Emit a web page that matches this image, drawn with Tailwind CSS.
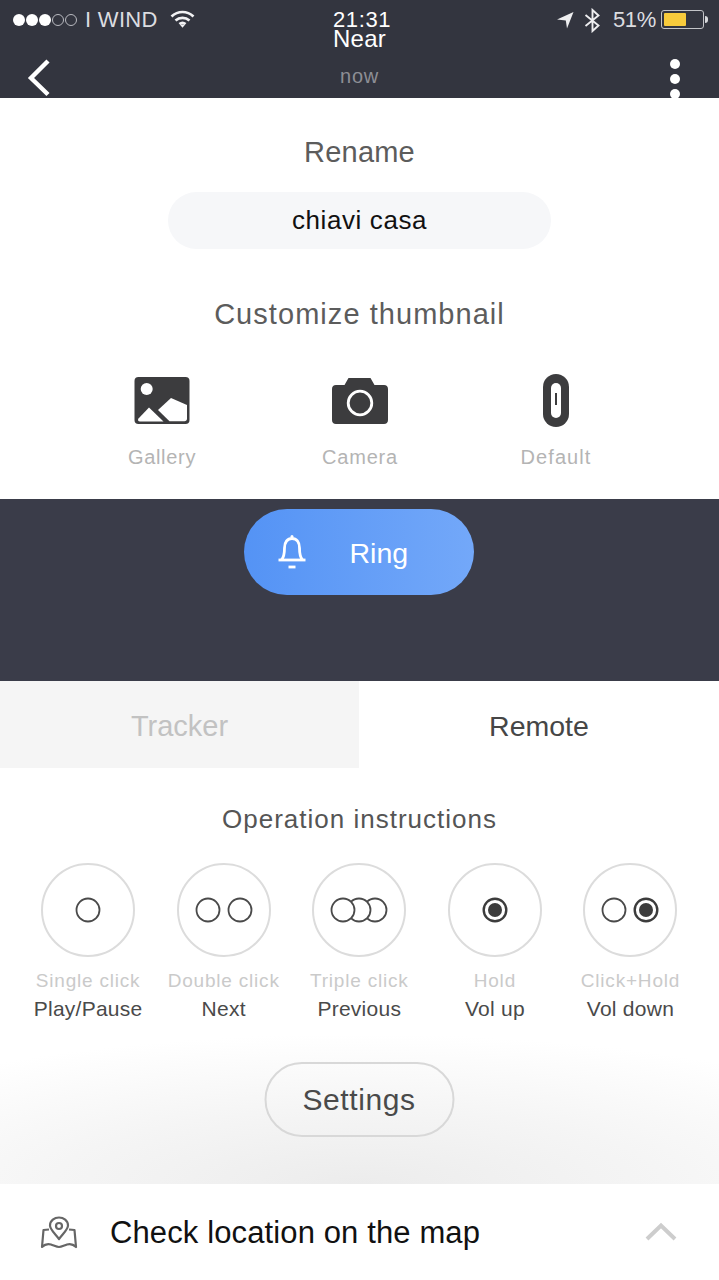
<!DOCTYPE html>
<html>
<head>
<meta charset="utf-8">
<script src="https://cdn.jsdelivr.net/npm/@tailwindcss/browser@4"></script>
</head>
<body class="bg-white font-['Liberation_Sans',sans-serif]">
<div class="relative w-[719px] h-[1280px] overflow-hidden flex flex-col bg-white">

  <!-- status bar overlay -->
  <div class="absolute z-10 top-0 left-0 w-full h-[40px] text-[#dcdde0] text-[22px] leading-none">
    <div class="absolute left-[13px] top-[14px] flex items-center gap-[1px]">
      <span class="w-[12px] h-[12px] rounded-full bg-white"></span>
      <span class="w-[12px] h-[12px] rounded-full bg-white"></span>
      <span class="w-[12px] h-[12px] rounded-full bg-white"></span>
      <span class="w-[12px] h-[12px] rounded-full border border-[#b9bac0]"></span>
      <span class="w-[12px] h-[12px] rounded-full border border-[#b9bac0]"></span>
    </div>
    <span class="absolute left-[85px] top-[9px] tracking-[0.300px]">I WIND</span>
    <svg class="absolute left-[170px] top-[9px]" width="25" height="20" viewBox="0 0 25 20" fill="none" stroke="#f2f2f4" stroke-width="2.700"><path d="M1.500 7.500C8 1.500 17 1.500 23.500 7.500"/><path d="M5.500 11.500C9.500 8 15.500 8 19.500 11.500"/><path d="M9.400 15C11.200 13.600 13.800 13.600 15.600 15"/><path d="M9.800 15.500L12.500 18.800L15.200 15.500Z" fill="#f2f2f4" stroke="none"/></svg>
    <span class="absolute left-[333px] top-[9px] text-white tracking-[0.600px]">21:31</span>
    <svg class="absolute left-[556px] top-[11px]" width="20" height="18" viewBox="0 0 20 18"><path d="M17.500 1L1 8.500L9.800 9.400L11 17.500Z" fill="#eeeef0"/></svg>
    <svg class="absolute left-[584px] top-[8px]" width="17" height="25" viewBox="0 0 17 25" fill="none" stroke="#eeeef0" stroke-width="1.900"><path d="M1.500 7L14.500 17.500L8.500 23V2L14.500 7.500L1.500 18"/></svg>
    <span class="absolute left-[613px] top-[9px] tracking-[-0.400px]">51%</span>
    <div class="absolute left-[661px] top-[10px] w-[43px] h-[19px] rounded-[3px] border border-[#c3c4c8] p-[2px]">
      <div class="w-[22px] h-full bg-[#f8cb3c] rounded-[1px]"></div>
    </div>
    <span class="absolute left-[705px] top-[16px] w-[3px] h-[7px] rounded-r-full bg-[#d8d9dc]"></span>
  </div>

  <!-- header -->
  <header class="relative h-[98px] shrink-0 bg-[#33353f] flex flex-col items-center">
    <span class="mt-[26px] text-[24px] leading-[26px] text-white tracking-[0.300px]">Near</span>
    <span class="mt-[12px] text-[20px] leading-[24px] text-[#8d8e95] tracking-[0.800px]">now</span>
    <svg class="absolute left-[26px] top-[59px]" width="26" height="38" viewBox="0 0 26 38" fill="none" stroke="#fff" stroke-width="4.400"><path d="M22 2L5 19L22 35.500"/></svg>
    <div class="absolute left-[670px] top-[59px] flex flex-col gap-[5px]">
      <span class="w-[10px] h-[10px] rounded-full bg-white"></span>
      <span class="w-[10px] h-[10px] rounded-full bg-white"></span>
      <span class="w-[10px] h-[10px] rounded-full bg-white"></span>
    </div>
  </header>

  <!-- rename / thumbnail -->
  <section class="h-[401px] shrink-0 flex flex-col items-center">
    <h2 class="mt-[37px] text-[29px] leading-[34px] font-normal text-[#5c5c5c] tracking-[0.200px]">Rename</h2>
    <div class="mt-[23px] w-[383px] h-[57px] rounded-full bg-[#f6f7f9] flex items-center justify-center text-[26px] text-[#111] tracking-[0.600px]">chiavi casa</div>
    <h2 class="mt-[48px] text-[29px] leading-[34px] font-normal text-[#5c5c5c] tracking-[1.050px]">Customize thumbnail</h2>
    <div class="mt-[45px] w-full relative h-[100px]">
      <div class="absolute left-[112px] w-[100px] flex flex-col items-center">
        <svg width="56" height="48" viewBox="0 0 56 48"><rect x="0.500" y="1" width="55" height="47" rx="4" fill="#3c3c3e"/><circle cx="12.700" cy="13" r="6" fill="#fff"/><path d="M4.500 42.500L15 31.500L29.500 45.500H6C4 45.500 3.500 44 4.500 42.500Z" fill="#fff"/><path d="M24 34L37 22L53 29V42.500C53 44.500 52 45.200 50.500 45.200H35.500Z" fill="#fff"/></svg>
        <span class="mt-[21px] text-[20px] leading-[24px] text-[#b4b4b4] tracking-[0.700px]">Gallery</span>
      </div>
      <div class="absolute left-[310px] w-[100px] flex flex-col items-center">
        <svg width="58" height="48" viewBox="0 0 58 48"><path d="M5 9H13.500L17.500 2H39.500L43.500 9H53C55.500 9 57 10.500 57 13V44C57 46.500 55.500 48 53 48H5C2.500 48 1 46.500 1 44V13C1 10.500 2.500 9 5 9Z" fill="#3c3c3e"/><circle cx="29" cy="27" r="11.800" fill="none" stroke="#fff" stroke-width="2.800"/></svg>
        <span class="mt-[21px] text-[20px] leading-[24px] text-[#b4b4b4] tracking-[0.800px]">Camera</span>
      </div>
      <div class="absolute left-[506px] top-[-2px] w-[100px] flex flex-col items-center">
        <svg width="26" height="53" viewBox="0 0 26 53"><rect x="0" y="0" width="26" height="53" rx="13" fill="#3c3c3e"/><rect x="8" y="9" width="10" height="35" rx="5" fill="#fff"/><rect x="12" y="19" width="2" height="12" fill="#3c3c3e"/></svg>
        <span class="mt-[18px] text-[20px] leading-[24px] text-[#b4b4b4] tracking-[1.100px]">Default</span>
      </div>
    </div>
  </section>

  <!-- ring band -->
  <section class="h-[182px] shrink-0 bg-[#3a3c49] flex justify-center pt-[10px] pr-[1px]">
    <button class="relative w-[230px] h-[86px] rounded-full bg-gradient-to-r from-[#5493f5] to-[#73a8f9] text-white">
      <svg class="absolute left-[34px] top-[25px]" width="28" height="37" viewBox="0 0 28 37" fill="none" stroke="#fff" stroke-width="2.800" stroke-linejoin="round"><path d="M0.500 26H27.500"/><path d="M3.500 26C6 23 6.500 20 6.500 14C6.500 8 9.500 4.500 14 4.500C18.500 4.500 21.500 8 21.500 14C21.500 20 22 23 24.500 26"/><circle cx="14" cy="2.500" r="1.500" fill="#fff" stroke="none"/><path d="M10.500 33H17.500"/></svg>
      <span class="absolute left-[105.500px] top-[27px] text-[28.500px] leading-[34px] whitespace-nowrap">Ring</span>
    </button>
  </section>

  <!-- tabs -->
  <nav class="h-[87px] shrink-0 flex text-[29px] leading-[34px]">
    <div class="w-[359px] bg-[#f5f5f5] flex items-center justify-center text-[#c2c2c2] pt-[2px]">Tracker</div>
    <div class="flex-1 bg-white flex items-center justify-center text-[#464646] pt-[2px] text-[28.500px]">Remote</div>
  </nav>

  <!-- instructions -->
  <section class="h-[416px] shrink-0 flex flex-col items-center bg-no-repeat bg-bottom bg-[length:100%_150px] bg-[radial-gradient(ellipse_85%_100%_at_50%_100%,#ececec,#f5f5f5_50%,#ffffff)]">
    <h3 class="mt-[35px] text-[26px] leading-[32px] font-normal text-[#555] tracking-[1px]">Operation instructions</h3>
    <div class="mt-[28px] w-full pl-[20.300px] flex">
      <div class="flex flex-col items-center w-[135.600px]">
        <div class="w-[94px] h-[94px] rounded-full border-2 border-[#dcdcdc] flex items-center justify-center">
          <svg width="26" height="26" viewBox="0 0 26 26" fill="none" stroke="#4a4a4a" stroke-width="1.800"><circle cx="13" cy="13" r="11.500"/></svg>
        </div>
        <span class="mt-[12px] text-[19px] leading-[24px] text-[#cacaca] tracking-[0.800px] whitespace-nowrap">Single click</span>
        <span class="mt-[3px] text-[21px] leading-[26px] text-[#4a4a4a] tracking-[0.250px] whitespace-nowrap">Play/Pause</span>
      </div>
      <div class="flex flex-col items-center w-[135.600px]">
        <div class="w-[94px] h-[94px] rounded-full border-2 border-[#dcdcdc] flex items-center justify-center">
          <svg width="58" height="26" viewBox="0 0 58 26" fill="none" stroke="#4a4a4a" stroke-width="1.800"><circle cx="13" cy="13" r="11.500"/><circle cx="45" cy="13" r="11.500"/></svg>
        </div>
        <span class="mt-[12px] text-[19px] leading-[24px] text-[#cacaca] tracking-[0.800px] whitespace-nowrap">Double click</span>
        <span class="mt-[3px] text-[21px] leading-[26px] text-[#4a4a4a] tracking-[0.250px] whitespace-nowrap">Next</span>
      </div>
      <div class="flex flex-col items-center w-[135.600px]">
        <div class="w-[94px] h-[94px] rounded-full border-2 border-[#dcdcdc] flex items-center justify-center">
          <svg width="58" height="26" viewBox="0 0 58 26" fill="#ffffff" stroke="#4a4a4a" stroke-width="1.800"><circle cx="45" cy="13" r="11.500"/><circle cx="29" cy="13" r="11.500"/><circle cx="13" cy="13" r="11.500"/></svg>
        </div>
        <span class="mt-[12px] text-[19px] leading-[24px] text-[#cacaca] tracking-[0.800px] whitespace-nowrap">Triple click</span>
        <span class="mt-[3px] text-[21px] leading-[26px] text-[#4a4a4a] tracking-[0.250px] whitespace-nowrap">Previous</span>
      </div>
      <div class="flex flex-col items-center w-[135.600px]">
        <div class="w-[94px] h-[94px] rounded-full border-2 border-[#dcdcdc] flex items-center justify-center">
          <svg width="26" height="26" viewBox="0 0 26 26"><circle cx="13" cy="13" r="11.300" fill="none" stroke="#3c3c3c" stroke-width="2.400"/><circle cx="13" cy="13" r="7" fill="#3c3c3c"/></svg>
        </div>
        <span class="mt-[12px] text-[19px] leading-[24px] text-[#cacaca] tracking-[0.800px] whitespace-nowrap">Hold</span>
        <span class="mt-[3px] text-[21px] leading-[26px] text-[#4a4a4a] tracking-[0.250px] whitespace-nowrap">Vol up</span>
      </div>
      <div class="flex flex-col items-center w-[135.600px]">
        <div class="w-[94px] h-[94px] rounded-full border-2 border-[#dcdcdc] flex items-center justify-center">
          <svg width="58" height="26" viewBox="0 0 58 26"><circle cx="13" cy="13" r="11.500" fill="none" stroke="#4a4a4a" stroke-width="1.800"/><circle cx="45" cy="13" r="11.300" fill="none" stroke="#3c3c3c" stroke-width="2.400"/><circle cx="45" cy="13" r="7" fill="#3c3c3c"/></svg>
        </div>
        <span class="mt-[12px] text-[19px] leading-[24px] text-[#cacaca] tracking-[0.800px] whitespace-nowrap">Click+Hold</span>
        <span class="mt-[3px] text-[21px] leading-[26px] text-[#4a4a4a] tracking-[0.250px] whitespace-nowrap">Vol down</span>
      </div>
    </div>
    <button class="mt-[40px] w-[190px] h-[75px] rounded-full border-2 border-[#d8d8d8] text-[30px] text-[#4a4a4a] tracking-[0.600px] -translate-x-[0.500px]">Settings</button>
  </section>

  <!-- bottom bar -->
  <footer class="relative flex-1 bg-white flex items-center pl-[110px]">
    <svg class="absolute left-[40px] top-[32px]" width="38" height="34" viewBox="0 0 38 34" fill="none" stroke="#666" stroke-width="2.200" stroke-linejoin="round"><path d="M19 23C15 17.500 10 13.500 10 9.500C10 4.500 14.500 1.500 19 1.500C23.500 1.500 28 4.500 28 9.500C28 13.500 23 17.500 19 23Z"/><circle cx="19" cy="10" r="3"/><path d="M9 13.500L3.500 14L2 31C5 28 8 27.500 11 28.500C14 29.500 17 31 19 31C21 31 24 29.500 27 28.500C30 27.500 33 28 36 31L34.500 14L29 13.500"/></svg>
    <span class="text-[31px] leading-none text-[#111] tracking-[0.120px]">Check location on the map</span>
    <svg class="absolute left-[645px] top-[38px]" width="32" height="20" viewBox="0 0 32 20" fill="none" stroke="#cdcdcd" stroke-width="4"><path d="M2 17L16 3.500L30 17"/></svg>
  </footer>
</div>
</body>
</html>
